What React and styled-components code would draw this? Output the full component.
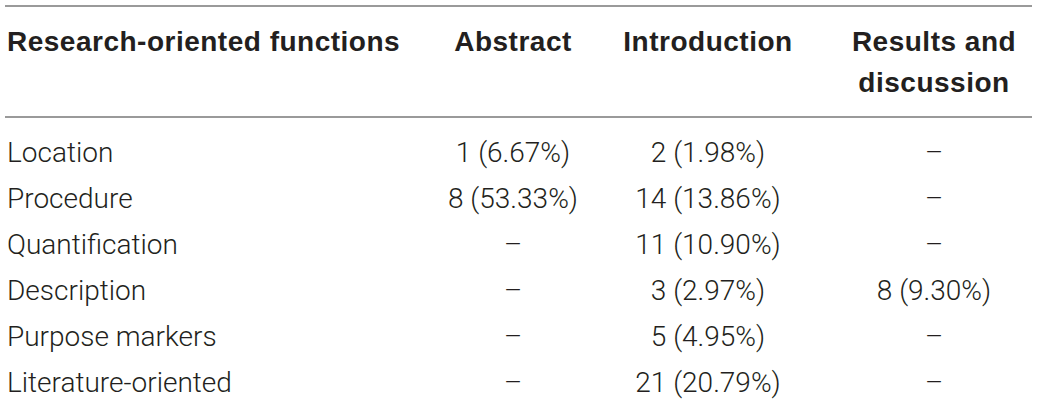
import React from 'react';
import styled, { createGlobalStyle } from 'styled-components';

const GlobalStyle = createGlobalStyle`
	html, body {
		margin: 0;
		padding: 0;
		background: #fff;
	}
`;

//#region styles
const Page = styled.div`
	padding: 5px 7px 0 5px;
	width: 1027px;
	color: #231f20;
`;

const Table = styled.div`
	display: grid;
	grid-template-columns: 433px 150px 240px 1fr;
	border-top: 2px solid #9a9a9a;
`;

const HeadCell = styled.div`
	font-family: 'Liberation Sans', Arial, sans-serif;
	font-weight: bold;
	font-size: 28px;
	letter-spacing: 0.5px;
	line-height: 41px;
	padding: 14px 0 13px ${(p) => (p.$first ? '2px' : p.$last ? '8px' : '0')};
	text-align: ${(p) => (p.$first ? 'left' : 'center')};
	border-bottom: 2px solid #9a9a9a;
	white-space: nowrap;
`;

const Cell = styled.div`
	font-family: Roboto, 'Liberation Sans', sans-serif;
	font-weight: 300;
	font-size: 28px;
	line-height: 46px;
	padding-left: ${(p) => (p.$first ? '2px' : p.$last ? '8px' : '0')};
	padding-top: ${(p) => (p.$top ? '12px' : '0')};
	text-align: ${(p) => (p.$first ? 'left' : 'center')};
	white-space: nowrap;
`;
//#endregion

const rows = [
	['Location', '1 (6.67%)', '2 (1.98%)', '–'],
	['Procedure', '8 (53.33%)', '14 (13.86%)', '–'],
	['Quantification', '–', '11 (10.90%)', '–'],
	['Description', '–', '3 (2.97%)', '8 (9.30%)'],
	['Purpose markers', '–', '5 (4.95%)', '–'],
	['Literature-oriented', '–', '21 (20.79%)', '–'],
];

const App = () => {
	return (
		<Page>
			<GlobalStyle />
			<Table>
				<HeadCell $first>Research-oriented functions</HeadCell>
				<HeadCell>Abstract</HeadCell>
				<HeadCell>Introduction</HeadCell>
				<HeadCell $last>
					Results and
					<br />
					discussion
				</HeadCell>

				{rows.map((row, i) =>
					row.map((value, j) => (
						<Cell key={`${i}-${j}`} $first={j === 0} $last={j === 3} $top={i === 0}>
							{value}
						</Cell>
					))
				)}
			</Table>
		</Page>
	);
};

export default App;
